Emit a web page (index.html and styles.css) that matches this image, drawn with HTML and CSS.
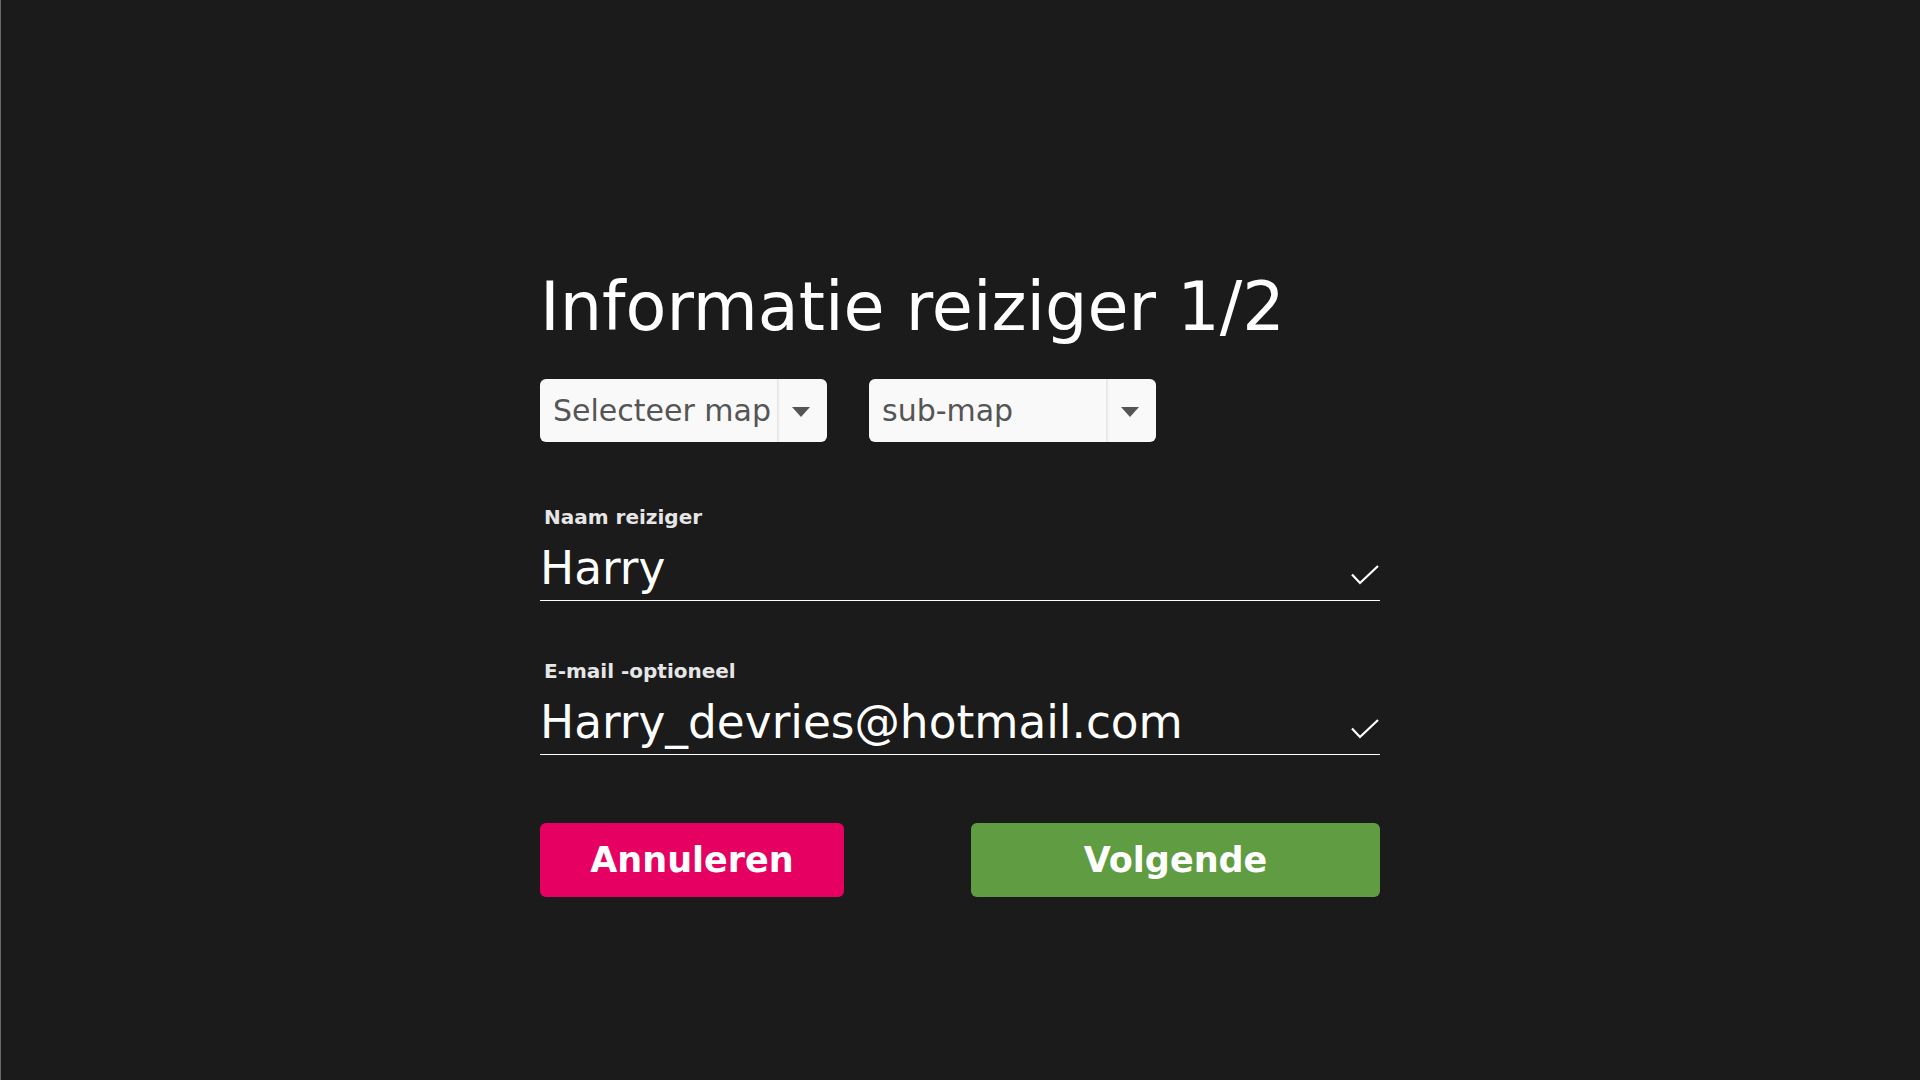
FILE: index.html
```html
<!DOCTYPE html>
<html lang="nl">
<head>
<meta charset="utf-8">
<title>Informatie reiziger</title>
<link rel="stylesheet" href="styles.css">
</head>
<body>
<main class="form">
  <h1 class="title">Informatie reiziger 1/2</h1>
  <div class="selects">
    <div class="select">
      <span class="select-text">Selecteer map</span>
      <span class="select-arrow"><span class="triangle"></span></span>
    </div>
    <div class="select">
      <span class="select-text">sub-map</span>
      <span class="select-arrow"><span class="triangle"></span></span>
    </div>
  </div>
  <div class="field">
    <div class="label">Naam reiziger</div>
    <div class="input-row">
      <span class="value">Harry</span>
      <svg class="check" width="28" height="20" viewBox="0 0 28 20"><polyline points="1,9.5 9,18 27,1" fill="none" stroke="#fff" stroke-width="2.2"/></svg>
    </div>
  </div>
  <div class="field">
    <div class="label">E-mail -optioneel</div>
    <div class="input-row">
      <span class="value">Harry_devries@hotmail.com</span>
      <svg class="check" width="28" height="20" viewBox="0 0 28 20"><polyline points="1,9.5 9,18 27,1" fill="none" stroke="#fff" stroke-width="2.2"/></svg>
    </div>
  </div>
  <div class="buttons">
    <button class="btn btn-cancel">Annuleren</button>
    <button class="btn btn-next">Volgende</button>
  </div>
</main>
</body>
</html>
```
FILE: styles.css
```css
* { box-sizing: border-box; }
html, body {
  margin: 0;
  padding: 0;
}
body {
  min-height: 100vh;
  background: #1b1b1b;
  box-shadow: inset 1px 0 0 #6a6a6a;
  font-family: "DejaVu Sans", Verdana, sans-serif;
  color: #fff;
}
.form {
  width: 840px;
  margin: 0 auto;
  padding-top: 274px;
}
.title {
  margin: 0;
  font-size: 66.8px;
  line-height: 66px;
  font-weight: normal;
  color: #fff;
}
.selects {
  display: flex;
  gap: 42px;
  margin-top: 39px;
}
.select {
  width: 287px;
  height: 63px;
  background: #f9f9f9;
  border-radius: 6px;
  display: flex;
  align-items: stretch;
}
.select-text {
  flex: 1;
  display: flex;
  align-items: center;
  padding-left: 13px;
  font-size: 30px;
  color: #555;
  white-space: nowrap;
}
.select-arrow {
  width: 50px;
  display: flex;
  align-items: center;
  justify-content: center;
  border-left: 1px solid #e6e6e6;
  box-shadow: inset 2px 0 3px -2px rgba(0,0,0,0.12);
}
.triangle {
  width: 0;
  height: 0;
  border-left: 9px solid transparent;
  border-right: 9px solid transparent;
  border-top: 10px solid #555;
  margin-top: 2px;
  margin-right: 4px;
}
.field {
  margin-top: 66px;
}
.field + .field {
  margin-top: 61px;
}
.label {
  font-size: 20px;
  line-height: 18px;
  font-weight: bold;
  color: #e6e6e6;
  padding-left: 4px;
}
.input-row {
  margin-top: 20px;
  display: flex;
  justify-content: space-between;
  align-items: flex-end;
  padding-bottom: 9px;
  border-bottom: 1px solid #fff;
}
.value {
  font-size: 45.4px;
  line-height: 45px;
  color: #fff;
}
.check {
  display: block;
  margin-bottom: 6px;
  margin-right: 1px;
}
.buttons {
  display: flex;
  justify-content: space-between;
  margin-top: 68px;
}
.btn {
  height: 74px;
  border: none;
  border-radius: 6px;
  font-family: "DejaVu Sans", Verdana, sans-serif;
  font-weight: bold;
  font-size: 35px;
  color: #fff;
  padding: 0;
}
.btn-cancel {
  width: 304px;
  background: #e60062;
}
.btn-next {
  width: 409px;
  background: #609c41;
}
```
